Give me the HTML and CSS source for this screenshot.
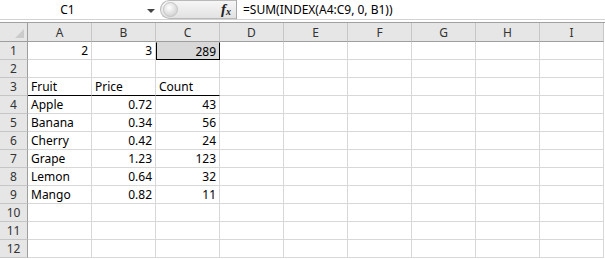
FILE: index.html
```html
<!DOCTYPE html>
<html lang="en">
<head>
    <meta charset="UTF-8">
    <title>Sheet1</title>
    <link rel="stylesheet" href="styles.css">
</head>
<body>

    <div class="formula-bar">
        <div class="name-box">
            <span class="name">C1</span>
            <span class="arrow"></span>
        </div>
        <div class="fx-box">
            <span class="knob"></span>
            <span class="fx">f<sub>x</sub></span>
        </div>
        <div class="formula">=SUM(INDEX(A4:C9, 0, B1))</div>
    </div>
    <div class="bar-gap"></div>

    <div class="sheet">
        <div class="corner"><span class="tri"></span></div>
        <div class="colhead">A</div>
        <div class="colhead">B</div>
        <div class="colhead">C</div>
        <div class="colhead">D</div>
        <div class="colhead">E</div>
        <div class="colhead">F</div>
        <div class="colhead">G</div>
        <div class="colhead">H</div>
        <div class="colhead">I</div>

        <div class="rowhead">1</div>
        <div class="cell num">2</div>
        <div class="cell num">3</div>
        <div class="cell num active">289</div>
        <div class="cell"></div><div class="cell"></div><div class="cell"></div><div class="cell"></div><div class="cell"></div><div class="cell"></div>

        <div class="rowhead">2</div>
        <div class="cell"></div><div class="cell"></div><div class="cell"></div><div class="cell"></div><div class="cell"></div><div class="cell"></div><div class="cell"></div><div class="cell"></div><div class="cell"></div>

        <div class="rowhead">3</div>
        <div class="cell line">Fruit</div>
        <div class="cell line">Price</div>
        <div class="cell line">Count</div>
        <div class="cell"></div><div class="cell"></div><div class="cell"></div><div class="cell"></div><div class="cell"></div><div class="cell"></div>

        <div class="rowhead">4</div>
        <div class="cell">Apple</div>
        <div class="cell num">0.72</div>
        <div class="cell num">43</div>
        <div class="cell"></div><div class="cell"></div><div class="cell"></div><div class="cell"></div><div class="cell"></div><div class="cell"></div>

        <div class="rowhead">5</div>
        <div class="cell">Banana</div>
        <div class="cell num">0.34</div>
        <div class="cell num">56</div>
        <div class="cell"></div><div class="cell"></div><div class="cell"></div><div class="cell"></div><div class="cell"></div><div class="cell"></div>

        <div class="rowhead">6</div>
        <div class="cell">Cherry</div>
        <div class="cell num">0.42</div>
        <div class="cell num">24</div>
        <div class="cell"></div><div class="cell"></div><div class="cell"></div><div class="cell"></div><div class="cell"></div><div class="cell"></div>

        <div class="rowhead">7</div>
        <div class="cell">Grape</div>
        <div class="cell num">1.23</div>
        <div class="cell num">123</div>
        <div class="cell"></div><div class="cell"></div><div class="cell"></div><div class="cell"></div><div class="cell"></div><div class="cell"></div>

        <div class="rowhead">8</div>
        <div class="cell">Lemon</div>
        <div class="cell num">0.64</div>
        <div class="cell num">32</div>
        <div class="cell"></div><div class="cell"></div><div class="cell"></div><div class="cell"></div><div class="cell"></div><div class="cell"></div>

        <div class="rowhead">9</div>
        <div class="cell">Mango</div>
        <div class="cell num">0.82</div>
        <div class="cell num">11</div>
        <div class="cell"></div><div class="cell"></div><div class="cell"></div><div class="cell"></div><div class="cell"></div><div class="cell"></div>

        <div class="rowhead">10</div>
        <div class="cell"></div><div class="cell"></div><div class="cell"></div><div class="cell"></div><div class="cell"></div><div class="cell"></div><div class="cell"></div><div class="cell"></div><div class="cell"></div>

        <div class="rowhead">11</div>
        <div class="cell"></div><div class="cell"></div><div class="cell"></div><div class="cell"></div><div class="cell"></div><div class="cell"></div><div class="cell"></div><div class="cell"></div><div class="cell"></div>

        <div class="rowhead">12</div>
        <div class="cell"></div><div class="cell"></div><div class="cell"></div><div class="cell"></div><div class="cell"></div><div class="cell"></div><div class="cell"></div><div class="cell"></div><div class="cell"></div>
    </div>

</body>
</html>
```

FILE: styles.css
```css
body {
    margin: 0;
    background: #fff;
    font-family: 'Noto Sans', 'Noto Sans CJK KR', sans-serif;
    font-size: 12px;
    color: #000;
    width: 605px;
    height: 259px;
    overflow: hidden;
}

/* formula bar */
.formula-bar {
    display: flex;
    align-items: center;
    height: 20px;
    box-sizing: border-box;
    border-bottom: 1px solid #d3d3d3;
}
.name-box {
    display: flex;
    align-items: center;
    width: 160px;
    height: 19px;
    padding-right: 5px;
    box-sizing: border-box;
}
.name {
    flex: 1;
    text-align: center;
    padding-right: 12px;
}
.arrow {
    width: 0;
    height: 0;
    border-left: 4px solid transparent;
    border-right: 4px solid transparent;
    border-top: 4px solid #444;
    margin-top: 2px;
}
.fx-box {
    display: flex;
    align-items: center;
    justify-content: space-between;
    width: 76px;
    height: 19px;
    box-sizing: border-box;
    padding: 0 5px 0 2px;
    border: 1px solid #b9b9b9;
    border-right: none;
    border-radius: 10px 0 0 10px;
    background: linear-gradient(#f6f6f6, #e2e2e2);
}
.knob {
    width: 13px;
    height: 13px;
    border-radius: 50%;
    border: 1px solid #c4c4c4;
    background: radial-gradient(circle at 40% 35%, #ffffff, #d4d4d4 75%);
}
.fx {
    font-family: 'Liberation Serif', serif;
    font-style: italic;
    font-weight: bold;
    font-size: 15px;
    color: #222;
    line-height: 1;
}
.fx sub {
    font-size: 10px;
    vertical-align: baseline;
    position: relative;
    top: 1px;
}
.formula {
    flex: 1;
    height: 19px;
    line-height: 19px;
    padding-left: 6px;
    border-left: 1px solid #a9a9a9;
}
.bar-gap {
    height: 3px;
    border-bottom: 1px solid #a0a0a0;
    box-sizing: border-box;
    background: #fff;
}

/* grid */
.sheet {
    display: grid;
    grid-template-columns: 28px repeat(9, 64px);
    grid-template-rows: 19px repeat(12, 18px);
}
.sheet > div {
    box-sizing: border-box;
    line-height: 17px;
    white-space: nowrap;
    overflow: hidden;
}
.corner,
.colhead,
.rowhead {
    background: #e6e6e6;
    color: #333;
    text-align: center;
    border-right: 1px solid #c6c6c6;
    border-bottom: 1px solid #c6c6c6;
}
.sheet > .colhead {
    line-height: 19px;
}
.corner {
    position: relative;
    border-right-color: #9e9e9e;
    border-bottom-color: #9e9e9e;
}
.tri {
    position: absolute;
    right: 3px;
    bottom: 3px;
    width: 0;
    height: 0;
    border-left: 9px solid transparent;
    border-bottom: 9px solid #cbcbcb;
}
.rowhead {
    border-right-color: #9e9e9e;
}
.colhead {
    border-bottom-color: #9e9e9e;
}
.cell {
    padding: 0 3px;
    border-right: 1px solid #d8d8d8;
    border-bottom: 1px solid #d8d8d8;
}
.num {
    text-align: right;
}
.line {
    border-bottom-color: #000;
}
.active {
    background: #d8d8d8;
    border: 1px solid #000;
    border-top-color: #d8d8d8;
}
```
